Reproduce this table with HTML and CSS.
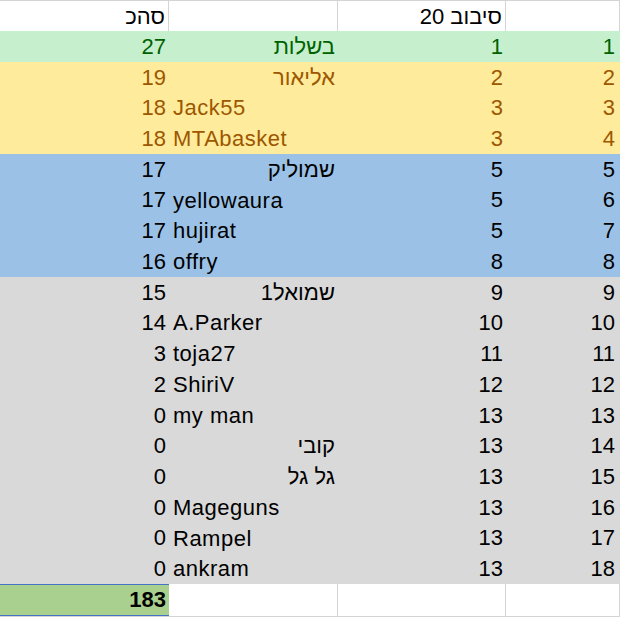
FILE: index.html
```html
<!DOCTYPE html>
<html lang="he">
<head>
<meta charset="utf-8">
<title>טבלה</title>
<link rel="stylesheet" href="styles.css">
</head>
<body>
<div class="sheet">
  <div class="row head">
    <div class="cell num">סהכ</div>
    <div class="cell"></div>
    <div class="cell num">סיבוב 20</div>
    <div class="cell num last"></div>
  </div>

  <div class="row good">
    <div class="cell num">27</div><div class="cell name" dir="auto">בשלות</div><div class="cell num">1</div><div class="cell num last">1</div>
  </div>
  <div class="row neutral">
    <div class="cell num">19</div><div class="cell name" dir="auto">אליאור</div><div class="cell num">2</div><div class="cell num last">2</div>
  </div>
  <div class="row neutral">
    <div class="cell num">18</div><div class="cell name" dir="auto">Jack55</div><div class="cell num">3</div><div class="cell num last">3</div>
  </div>
  <div class="row neutral">
    <div class="cell num">18</div><div class="cell name" dir="auto">MTAbasket</div><div class="cell num">3</div><div class="cell num last">4</div>
  </div>
  <div class="row blue">
    <div class="cell num">17</div><div class="cell name" dir="auto">שמוליק</div><div class="cell num">5</div><div class="cell num last">5</div>
  </div>
  <div class="row blue">
    <div class="cell num">17</div><div class="cell name" dir="auto">yellowaura</div><div class="cell num">5</div><div class="cell num last">6</div>
  </div>
  <div class="row blue">
    <div class="cell num">17</div><div class="cell name" dir="auto">hujirat</div><div class="cell num">5</div><div class="cell num last">7</div>
  </div>
  <div class="row blue">
    <div class="cell num">16</div><div class="cell name" dir="auto">offry</div><div class="cell num">8</div><div class="cell num last">8</div>
  </div>
  <div class="row grey">
    <div class="cell num">15</div><div class="cell name" dir="auto">שמואל1</div><div class="cell num">9</div><div class="cell num last">9</div>
  </div>
  <div class="row grey">
    <div class="cell num">14</div><div class="cell name" dir="auto">A.Parker</div><div class="cell num">10</div><div class="cell num last">10</div>
  </div>
  <div class="row grey">
    <div class="cell num">3</div><div class="cell name" dir="auto">toja27</div><div class="cell num">11</div><div class="cell num last">11</div>
  </div>
  <div class="row grey">
    <div class="cell num">2</div><div class="cell name" dir="auto">ShiriV</div><div class="cell num">12</div><div class="cell num last">12</div>
  </div>
  <div class="row grey">
    <div class="cell num">0</div><div class="cell name" dir="auto">my man</div><div class="cell num">13</div><div class="cell num last">13</div>
  </div>
  <div class="row grey">
    <div class="cell num">0</div><div class="cell name" dir="auto">קובי</div><div class="cell num">13</div><div class="cell num last">14</div>
  </div>
  <div class="row grey">
    <div class="cell num">0</div><div class="cell name" dir="auto">גל גל</div><div class="cell num">13</div><div class="cell num last">15</div>
  </div>
  <div class="row grey">
    <div class="cell num">0</div><div class="cell name" dir="auto">Mageguns</div><div class="cell num">13</div><div class="cell num last">16</div>
  </div>
  <div class="row grey">
    <div class="cell num">0</div><div class="cell name" dir="auto">Rampel</div><div class="cell num">13</div><div class="cell num last">17</div>
  </div>
  <div class="row grey">
    <div class="cell num">0</div><div class="cell name" dir="auto">ankram</div><div class="cell num">13</div><div class="cell num last">18</div>
  </div>

  <div class="row foot">
    <div class="cell num total">183</div>
    <div class="cell empty"></div>
    <div class="cell empty"></div>
    <div class="cell empty last"></div>
  </div>
</div>
</body>
</html>
```

FILE: styles.css
```css
html, body {
  margin: 0;
  padding: 0;
  background: #ffffff;
}

body {
  font-family: "Liberation Sans", Arial, "DejaVu Sans", sans-serif;
  font-size: 22px;
  color: #000000;
}

.sheet {
  width: 620px;
  height: 617px;
  display: grid;
  grid-template-rows: 31px repeat(18, 1fr) 33px;
}

.row {
  display: grid;
  grid-template-columns: 169px 169px 168px 114px;
  min-height: 0;
}

.cell {
  overflow: hidden;
  white-space: nowrap;
  padding: 1px 3px 0 4px;
  display: flex;
  align-items: center;
}

.cell.num {
  justify-content: flex-end;
  padding-right: 3px;
}

.cell.num.last {
  padding-right: 5px;
}

.cell.name {
  display: block;
  text-align: start;
  line-height: 31.5px;
  padding: 0 3px 0 4px;
}

.cell.name:dir(ltr) {
  letter-spacing: 0.5px;
}

/* header */
.head {
  background: #ffffff;
  border-top: 1px solid #d4d4d4;
}

.head .cell {
  border-right: 1px solid #d4d4d4;
}

/* status rows */
.good {
  background: #c6efce;
  color: #006100;
}

.neutral {
  background: #ffeb9c;
  color: #9c5700;
}

.blue {
  background: #9bc2e6;
}

.grey {
  background: #d9d9d9;
}

/* footer */
.foot {
  border-bottom: 1px solid #d4d4d4;
}

.foot .total {
  background: #a9d08e;
  border-top: 1px solid #4472c4;
  border-bottom: 1px solid #4472c4;
  font-weight: bold;
}

.foot .empty {
  background: #ffffff;
  border-right: 1px solid #d4d4d4;
}
```
